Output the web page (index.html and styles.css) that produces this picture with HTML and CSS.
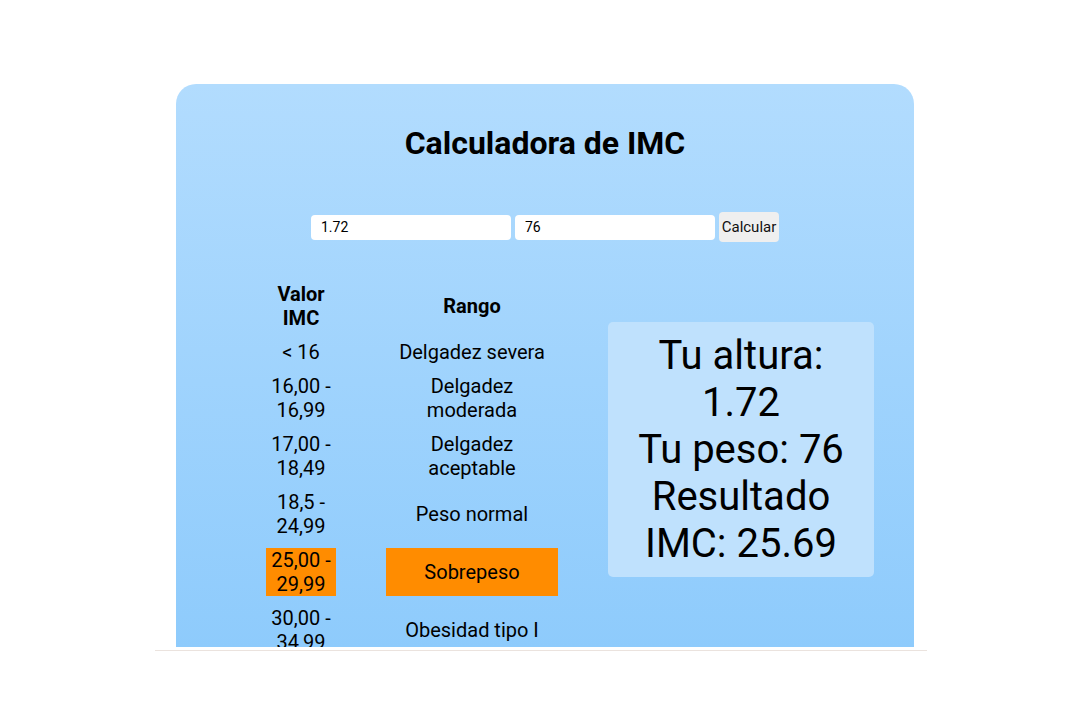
FILE: index.html
```html
<!DOCTYPE html>
<html lang="es">
<head>
<meta charset="utf-8">
<title>Calculadora de IMC</title>
<link rel="stylesheet" href="styles.css">
</head>
<body>
<div class="viewport">
  <main class="card">
    <h1 class="title">Calculadora de IMC</h1>
    <form class="inputs">
      <input class="field" type="text" value="1.72">
      <input class="field" type="text" value="76">
      <button class="btn" type="button">Calcular</button>
    </form>
    <section class="content">
      <div class="table">
        <div class="cell head">Valor IMC</div>
        <div class="cell head">Rango</div>
        <div class="cell">&lt; 16</div>
        <div class="cell">Delgadez severa</div>
        <div class="cell">16,00 - 16,99</div>
        <div class="cell">Delgadez moderada</div>
        <div class="cell">17,00 - 18,49</div>
        <div class="cell">Delgadez aceptable</div>
        <div class="cell">18,5 - 24,99</div>
        <div class="cell">Peso normal</div>
        <div class="cell active">25,00 - 29,99</div>
        <div class="cell active">Sobrepeso</div>
        <div class="cell">30,00 - 34,99</div>
        <div class="cell">Obesidad tipo I</div>
        <div class="cell">35,00 - 39,99</div>
        <div class="cell">Obesidad tipo II</div>
        <div class="cell">&gt; 40</div>
        <div class="cell">Obesidad tipo III</div>
      </div>
      <div class="result">
        <div>Tu altura: 1.72</div>
        <div>Tu peso: 76</div>
        <div>Resultado IMC: 25.69</div>
      </div>
    </section>
  </main>
</div>
<div class="rule"></div>
</body>
</html>
```

FILE: styles.css
```css
html, body {
  margin: 0;
  padding: 0;
  background: #ffffff;
  font-family: Roboto, "Liberation Sans", sans-serif;
  color: #000;
}

.viewport {
  width: 772px;
  height: 647px;
  margin-left: 155px;
  overflow: hidden;
  box-sizing: border-box;
  padding-left: 21px;
  padding-top: 84px;
}

.card {
  width: 738px;
  min-height: 900px;
  border-radius: 20px 20px 0 0;
  background: linear-gradient(180deg, #b2dcfe 0px, #8ecbfc 564px, #8ecbfc 900px);
}

.title {
  margin: 0;
  padding-top: 41px;
  font-size: 32px;
  font-weight: 700;
  line-height: 37px;
  text-align: center;
}

.inputs {
  display: flex;
  justify-content: center;
  align-items: center;
  gap: 4px;
  margin: 50px 0 0 0;
  height: 30px;
}

.field {
  width: 200px;
  height: 25px;
  box-sizing: border-box;
  border: none;
  border-radius: 4px;
  background: #fff;
  padding: 0 10px;
  font-family: Roboto, "Liberation Sans", sans-serif;
  font-size: 14px;
  color: #000;
  outline: none;
}

.btn {
  width: 60px;
  height: 30px;
  border: none;
  border-radius: 4px;
  background: #efefef;
  padding: 0 2px;
  font-family: Roboto, "Liberation Sans", sans-serif;
  font-size: 15px;
  color: #111;
}

.content {
  display: flex;
  align-items: flex-start;
  gap: 50px;
  padding-left: 90px;
  margin-top: 40px;
}

.table {
  display: grid;
  grid-template-columns: 70px 172px;
  column-gap: 50px;
  row-gap: 10px;
}

.cell {
  display: flex;
  align-items: center;
  justify-content: center;
  text-align: center;
  font-size: 20px;
  line-height: 24px;
}

.head {
  font-weight: 700;
}

.active {
  background: #ff8c00;
}

.result {
  width: 266px;
  box-sizing: border-box;
  margin-top: 40px;
  padding: 10px;
  border-radius: 5px;
  background: #bfe1fd;
  font-size: 40px;
  text-align: center;
}

.rule {
  width: 772px;
  height: 1px;
  margin-left: 155px;
  margin-top: 3px;
  background: #ebe3de;
}
```
